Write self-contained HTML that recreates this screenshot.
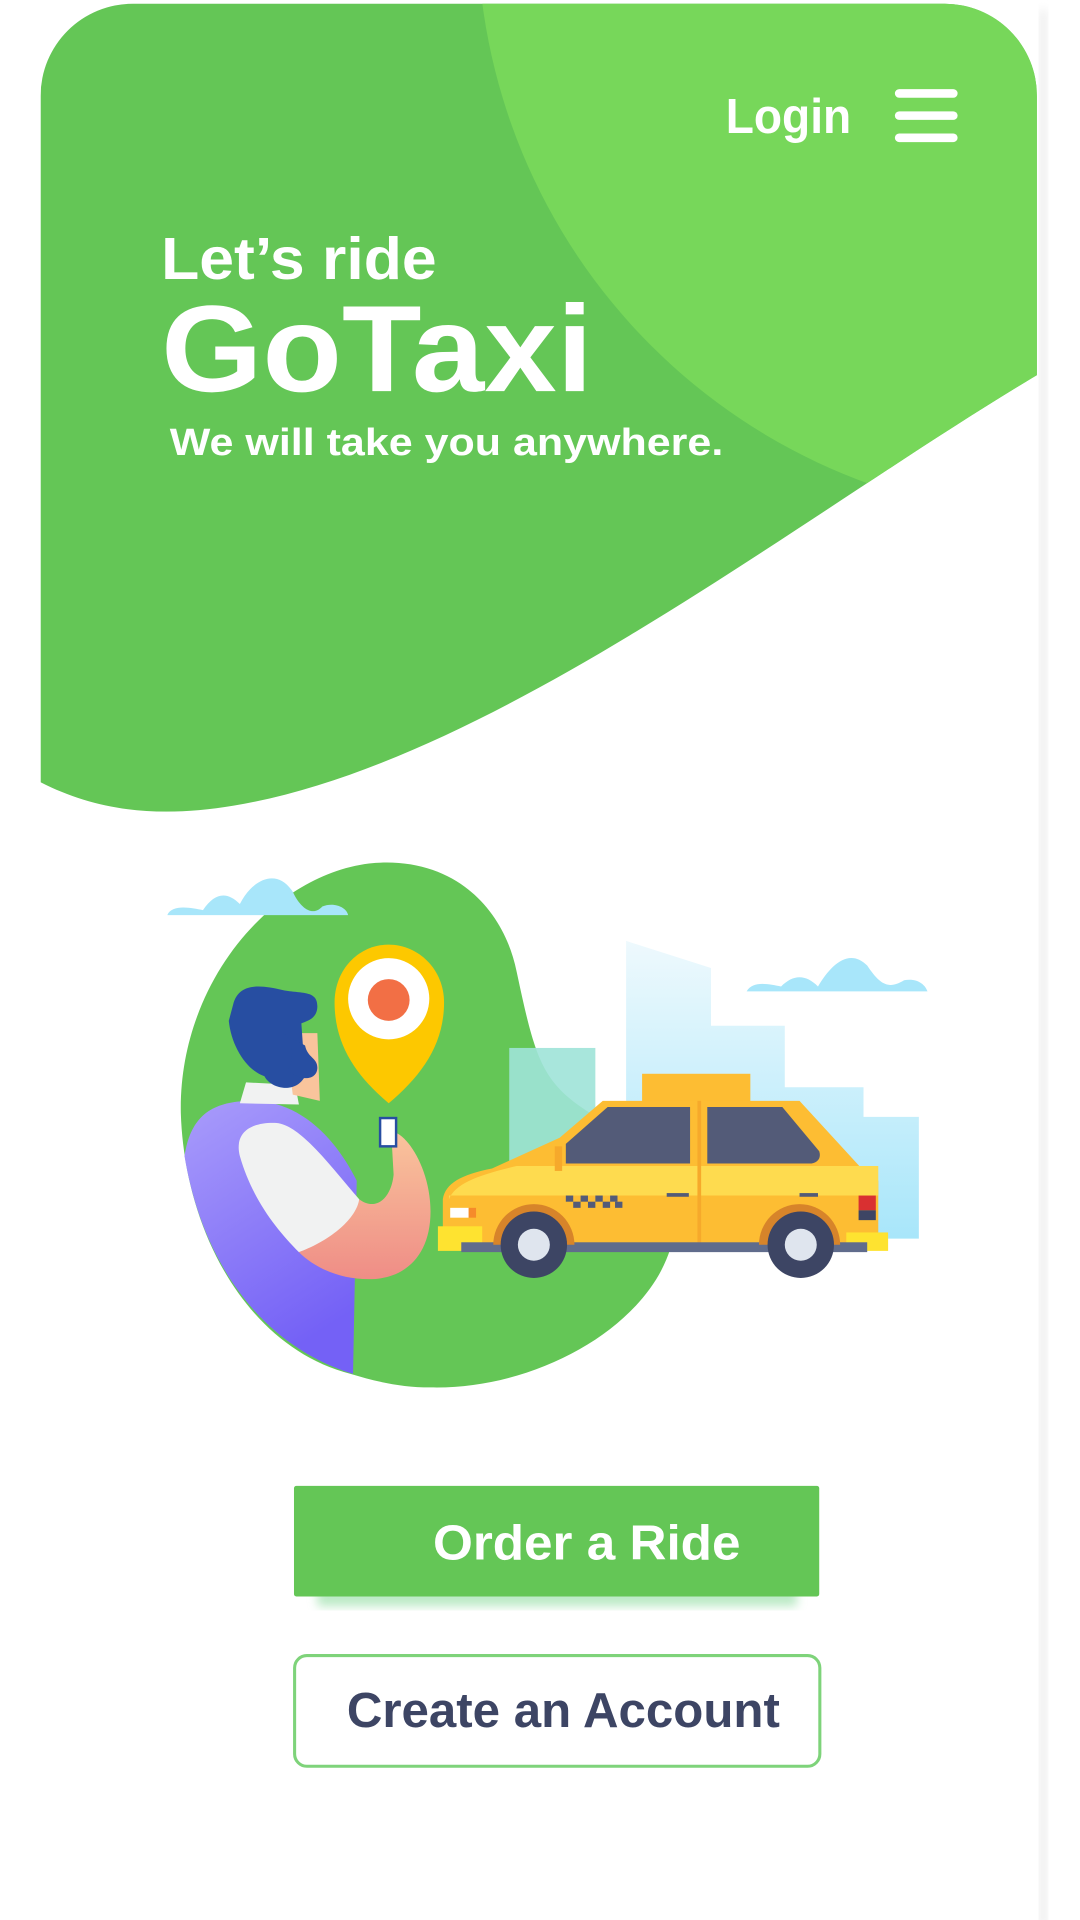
<!DOCTYPE html>
<html><head><meta charset="utf-8"><style>
html,body{margin:0;padding:0;background:#fff;width:1080px;height:1920px;overflow:hidden}
svg{display:block}
text{font-family:"Liberation Sans",sans-serif;font-weight:bold}
</style></head><body>
<svg width="1080" height="1920" viewBox="0 0 878 1561" preserveAspectRatio="none">
<defs>
<filter id="sh" x="-10%" y="-10%" width="130%" height="130%"><feGaussianBlur stdDeviation="4"/></filter>
<clipPath id="gc"><path d="M33,636 C80,660 130,665 190,655 C400,620 650,420 843,305 L843,0 L33,0 Z"/></clipPath>
<clipPath id="card"><rect x="33" y="3" width="810" height="1600" rx="75"/></clipPath>
<linearGradient id="sky" x1="0" y1="0" x2="0" y2="1"><stop offset="0" stop-color="#eef9fd"/><stop offset="1" stop-color="#a8e6fa"/></linearGradient>
<linearGradient id="vest" x1="0" y1="0" x2="0.4" y2="1"><stop offset="0" stop-color="#a99cfb"/><stop offset="1" stop-color="#7461f6"/></linearGradient>
<linearGradient id="arm" x1="0" y1="0" x2="0" y2="1"><stop offset="0" stop-color="#f9c49c"/><stop offset="1" stop-color="#ef8d86"/></linearGradient>
</defs>
<rect x="845" y="8" width="6" height="1560" fill="#ececec" filter="url(#sh)"/>
<rect x="33" y="3" width="810" height="1600" rx="75" fill="#fff"/>
<g clip-path="url(#card)">
<g clip-path="url(#gc)">
<rect x="0" y="0" width="878" height="700" fill="#64C656"/>
<circle cx="870" cy="-60" r="482" fill="#77D75A"/>
</g>
</g>
<text x="590" y="108" font-size="40" fill="#fff" textLength="102" lengthAdjust="spacingAndGlyphs">Login</text>
<g stroke="#fff" stroke-width="7" stroke-linecap="round"><line x1="731" y1="76" x2="775" y2="76"/><line x1="731" y1="94" x2="775" y2="94"/><line x1="731" y1="112" x2="775" y2="112"/></g>
<text x="131" y="227" font-size="48" fill="#fff" textLength="224" lengthAdjust="spacingAndGlyphs">Let’s ride</text>
<text x="131" y="318" font-size="100" fill="#fff" textLength="351" lengthAdjust="spacingAndGlyphs">GoTaxi</text>
<text x="138" y="370" font-size="31" fill="#fff" textLength="450" lengthAdjust="spacingAndGlyphs">We will take you anywhere.</text>

<!-- illustration -->
<path d="M285,1117 C200,1095 150,1000 147,905 C145,800 220,712 300,702 C370,695 410,740 420,790 C435,860 440,880 480,905 L545,1015 C525,1080 435,1130 350,1128 C325,1128 305,1123 285,1117 Z" fill="#64C656"/>
<path d="M136,744 C140,735 155,738 165,740 C175,725 185,725 195,735 C205,715 225,705 238,725 C245,740 255,745 262,737 C272,733 282,738 283,744 Z" fill="#a8e6fa"/>
<path d="M607,806 C612,797 625,800 635,802 C645,792 655,792 665,802 C675,785 690,770 705,785 C715,800 722,805 735,797 C745,795 752,800 754,806 Z" fill="#a8e6fa"/>
<path d="M509,765 L578,787 L578,834 L638,834 L638,884 L702,884 L702,908 L747,908 L747,1007 L509,1007 Z" fill="url(#sky)"/>
<rect x="414" y="852" width="70" height="160" fill="#9fe3d8" opacity="0.9"/>
<!-- pin -->
<path d="M316,897 C290,875 272,850 272,815 C272,788 292,768 316,768 C340,768 361,788 361,815 C361,850 342,875 316,897 Z" fill="#fdc800"/>
<circle cx="316" cy="812" r="33" fill="#fff"/>
<circle cx="316" cy="813" r="17" fill="#f26f45"/>
<!-- person -->
<path d="M150,940 C155,905 175,895 205,895 C240,895 270,920 290,960 L287,1117 C215,1095 165,1030 150,940 Z" fill="url(#vest)"/>
<path d="M200,880 L240,882 L243,898 L195,897 Z" fill="#f1f2f2"/>
<path d="M232,840 L258,840 L260,895 L238,890 Z" fill="#f9c49c"/>
<path d="M190,815 C195,800 210,800 230,805 C245,808 258,805 258,818 C258,828 250,830 245,832 L248,875 C240,890 220,885 215,875 C200,870 188,850 186,830 Z" fill="#274ea2"/>
<path d="M230,840 C238,845 240,860 234,870 C245,880 258,878 258,868 C258,860 250,860 248,850 Z" fill="#274ea2"/>
<path d="M195,940 C190,920 205,912 225,913 C245,915 270,950 292,975 C300,990 270,1010 243,1018 C225,1000 205,975 195,940 Z" fill="#f1f2f2"/>
<path d="M243,1018 C270,1008 290,990 292,975 C305,985 318,975 320,955 L318,920 C330,920 350,950 350,985 C350,1020 330,1040 300,1040 C275,1040 255,1030 243,1018 Z" fill="url(#arm)"/>
<rect x="309" y="909" width="13" height="23" fill="#fff" stroke="#274ea2" stroke-width="2"/>
<!-- car -->
<rect x="522" y="873" width="88" height="25" fill="#fdbd33"/>
<path d="M360,975 C362,962 375,955 400,950 L455,925 L490,895 L650,895 L705,955 L714,960 L714,1012 L360,1012 Z" fill="#fdbd33"/>
<path d="M365,975 C370,962 390,955 420,948 L714,948 L714,972 L365,972 Z" fill="#fedb4f"/>
<path d="M460,930 L494,900 L561,900 L561,946 L460,946 Z" fill="#535b78"/>
<path d="M575,900 L636,900 L666,936 C668,942 664,946 658,946 L575,946 Z" fill="#535b78"/>
<rect x="567" y="895" width="3" height="117" fill="#f6a92b"/>
<rect x="451" y="932" width="6" height="20" fill="#f6a92b"/>
<g fill="#535b78"><rect x="460" y="972" width="6" height="5"/><rect x="472" y="972" width="6" height="5"/><rect x="484" y="972" width="6" height="5"/><rect x="496" y="972" width="6" height="5"/><rect x="466" y="977" width="6" height="5"/><rect x="478" y="977" width="6" height="5"/><rect x="490" y="977" width="6" height="5"/><rect x="500" y="977" width="6" height="5"/><rect x="542" y="970" width="18" height="3"/><rect x="650" y="970" width="15" height="3"/></g>
<rect x="366" y="982" width="15" height="8" fill="#fff"/><rect x="381" y="982" width="6" height="8" fill="#f68b2a"/>
<rect x="698" y="972" width="14" height="12" fill="#d93031"/><rect x="698" y="984" width="14" height="8" fill="#3d4564"/>
<rect x="356" y="997" width="36" height="20" fill="#fee330"/><rect x="688" y="1002" width="34" height="15" fill="#fee330"/>
<rect x="375" y="1010" width="330" height="8" fill="#606c8c"/>
<path d="M401,1012 A33,33 0 0 1 467,1012 Z" fill="#d7842a"/>
<path d="M617,1012 A33,33 0 0 1 683,1012 Z" fill="#d7842a"/>
<circle cx="434" cy="1012" r="27" fill="#3d4564"/><circle cx="434" cy="1012" r="13" fill="#dfe5ee"/>
<circle cx="651" cy="1012" r="27" fill="#3d4564"/><circle cx="651" cy="1012" r="13" fill="#dfe5ee"/>

<!-- buttons -->
<rect x="258" y="1290" width="390" height="16" fill="#8fdca0" opacity="0.6" filter="url(#sh)"/>
<rect x="239" y="1208" width="427" height="90" rx="2" fill="#64C656"/>
<text x="352" y="1268" font-size="40" fill="#fff" textLength="250" lengthAdjust="spacingAndGlyphs">Order a Ride</text>
<rect x="239.5" y="1346" width="427" height="90" rx="10" fill="#fff" stroke="#7ED37A" stroke-width="2.5"/>
<text x="282" y="1404" font-size="40" fill="#3D4564" textLength="352" lengthAdjust="spacingAndGlyphs">Create an Account</text>
</svg>
</body></html>
